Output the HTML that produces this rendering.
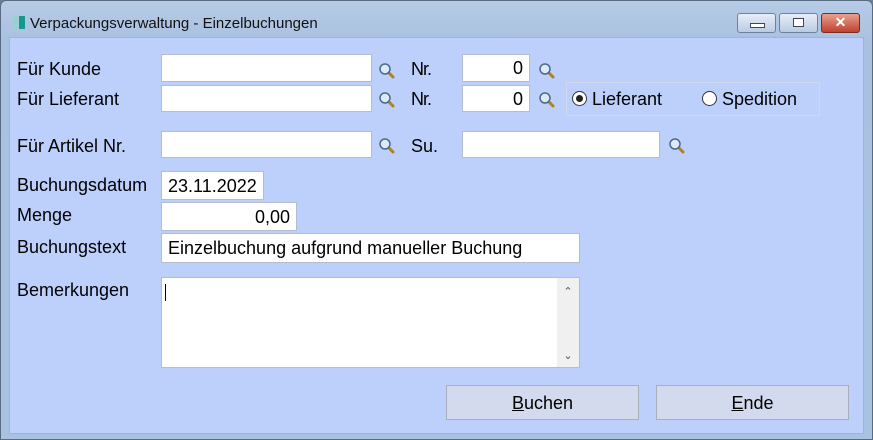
<!DOCTYPE html><html><head><style>
body{margin:0;width:873px;height:440px;overflow:hidden;background:#6b7f99;font-family:"Liberation Sans",Arial,sans-serif}
.win{position:absolute;left:0;top:0;width:871px;height:438px;border:1px solid #5a6a80;border-radius:6px 6px 0 0;background:linear-gradient(#b6cbe6,#a9c1e0 40px,#a8c3e2);}
.title{position:absolute;left:29px;top:14px;font-size:15px;color:#111}
.client{position:absolute;left:9px;top:37px;width:853px;height:395px;background:#bdd0fc;border:1px solid #9fb4d6}
.a{position:absolute}
.l{position:absolute;font-size:18px;color:#000}
.in{position:absolute;background:#fff;border:1px solid #b5bdcc;box-sizing:border-box;font-size:18px;padding:0 6px;line-height:27px}
.r{text-align:right}
.mag{position:absolute;width:20px;height:20px}
.btn{position:absolute;box-sizing:border-box;border:1px solid #a9aeb8;background:#d3daee;font-size:18px;text-align:center;line-height:35px}
.wb{position:absolute;top:12px;height:20px;border:1px solid #6d82a0;border-radius:3px;box-sizing:border-box;background:linear-gradient(#e6eef8,#b9cbe3)}
</style></head><body>
<div class="win">
<div class="a" style="left:12px;top:15px;width:5px;height:13px;background:#8fd6cc"></div>
<div class="a" style="left:18px;top:15px;width:6px;height:13px;background:#16998a"></div>
<div class="title">Verpackungsverwaltung - Einzelbuchungen</div>
<div class="wb" style="left:736px;width:39px"><div class="a" style="left:12px;top:9px;width:13px;height:3px;border:1px solid #445;background:#fff"></div></div>
<div class="wb" style="left:778px;width:39px"><div class="a" style="left:13px;top:4px;width:9px;height:7px;border:1px solid #445;background:#fff"></div></div>
<div class="wb" style="left:820px;width:39px;background:linear-gradient(#e8a090,#c0422e);border-color:#7a2a20;color:#fff;font-weight:bold;text-align:center;font-size:14px;line-height:17px">✕</div>
</div>
<div class="client"></div>
<svg width="0" height="0" style="position:absolute"><defs><g id="m"><line x1="9" y1="9" x2="15" y2="15" stroke="#b08020" stroke-width="3" stroke-linecap="round"/><circle cx="7" cy="7" r="5" fill="#dfe9f5" stroke="#4a6a8c" stroke-width="1.5"/></g></defs></svg>
<div class="l" style="left:17px;top:59px">Für Kunde</div>
<div class="l" style="left:17px;top:89px">Für Lieferant</div>
<div class="l" style="left:17px;top:136px">Für Artikel Nr.</div>
<div class="l" style="left:17px;top:175px">Buchungsdatum</div>
<div class="l" style="left:17px;top:205px">Menge</div>
<div class="l" style="left:17px;top:237px">Buchungstext</div>
<div class="l" style="left:17px;top:280px">Bemerkungen</div>
<div class="in" style="left:161px;top:54px;width:211px;height:28px"></div>
<div class="in" style="left:161px;top:85px;width:211px;height:27px"></div>
<div class="in" style="left:161px;top:131px;width:211px;height:27px"></div>
<svg class="mag" style="left:378px;top:62px"><use href="#m"/></svg>
<svg class="mag" style="left:378px;top:91px"><use href="#m"/></svg>
<svg class="mag" style="left:378px;top:137px"><use href="#m"/></svg>
<div class="l" style="left:411px;top:59px;letter-spacing:-1px">Nr.</div>
<div class="l" style="left:411px;top:89px;letter-spacing:-1px">Nr.</div>
<div class="l" style="left:411px;top:136px">Su.</div>
<div class="in r" style="left:462px;top:54px;width:68px;height:28px">0</div>
<div class="in r" style="left:462px;top:85px;width:68px;height:27px">0</div>
<div class="in" style="left:462px;top:131px;width:198px;height:27px"></div>
<svg class="mag" style="left:538px;top:62px"><use href="#m"/></svg>
<svg class="mag" style="left:538px;top:91px"><use href="#m"/></svg>
<svg class="mag" style="left:668px;top:137px"><use href="#m"/></svg>
<div class="a" style="left:566px;top:82px;width:252px;height:32px;border:1px solid #d0d8ea"></div>
<svg class="a" style="left:571px;top:90px" width="17" height="17"><circle cx="8.5" cy="8.5" r="7" fill="#fff" stroke="#333"/><circle cx="8.5" cy="8.5" r="3.5" fill="#222"/></svg>
<div class="l" style="left:592px;top:89px">Lieferant</div>
<svg class="a" style="left:701px;top:90px" width="17" height="17"><circle cx="8.5" cy="8.5" r="7" fill="#fff" stroke="#333"/></svg>
<div class="l" style="left:722px;top:89px">Spedition</div>
<div class="in" style="left:161px;top:171px;width:103px;height:29px;line-height:28px">23.11.2022</div>
<div class="in r" style="left:161px;top:202px;width:136px;height:29px;line-height:28px">0,00</div>
<div class="in" style="left:161px;top:233px;width:419px;height:30px;line-height:29px">Einzelbuchung aufgrund manueller Buchung</div>
<div class="in" style="left:161px;top:277px;width:419px;height:91px"><div class="a" style="left:3px;top:6px;width:1px;height:17px;background:#000"></div>
<div class="a" style="right:0;top:0;width:22px;height:89px;background:#f0f0f0;color:#555;font-size:11px;text-align:center;line-height:12px"><div style="margin-top:8px">&#x2303;</div><div style="margin-top:52px">&#x2304;</div></div></div>
<div class="btn" style="left:446px;top:385px;width:193px;height:35px"><u>B</u>uchen</div>
<div class="btn" style="left:656px;top:385px;width:193px;height:35px"><u>E</u>nde</div>
</body></html>
